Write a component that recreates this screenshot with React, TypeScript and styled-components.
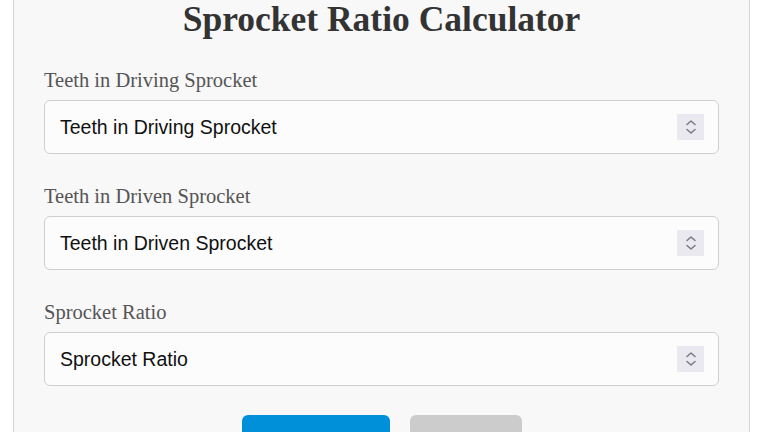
import React, { useState } from "react";
import styled, { createGlobalStyle } from "styled-components";

const GlobalStyle = createGlobalStyle`
  html, body {
    margin: 0;
    padding: 0;
    background: #ffffff;
  }
  body {
    font-family: "Liberation Serif", "Times New Roman", serif;
    overflow: hidden;
  }
`;

const Page = styled.div`
  padding: 0 18px 0 13px;
`;

const Card = styled.div`
  margin-top: -20px;
  background: #f8f8f8;
  border: 1px solid #d6d6d6;
  border-radius: 6px;
  padding: 20px 30px 30px;
`;

const Title = styled.h1`
  margin: 0 0 33px;
  font-family: "Liberation Serif", "Times New Roman", serif;
  font-size: 35.5px;
  line-height: 36px;
  font-weight: bold;
  color: #333333;
  text-align: center;
`;

const Group = styled.div<{ $last?: boolean }>`
  display: flex;
  flex-direction: column;
  gap: 10px;
  margin-bottom: ${(p) => (p.$last ? 29 : 32)}px;
`;

const Label = styled.label`
  font-size: 20.5px;
  line-height: 20px;
  color: #555555;
`;

const Field = styled.div`
  position: relative;
`;

const Input = styled.input`
  box-sizing: border-box;
  width: 100%;
  height: 54px;
  padding: 0 50px 0 15px;
  border: 1px solid #cfcfcf;
  border-radius: 6px;
  background: #fcfcfc;
  font-family: "Liberation Sans", Arial, sans-serif;
  font-size: 19.5px;
  color: #111111;
  outline: none;

  &::placeholder {
    color: #111111;
    opacity: 1;
  }
`;

const Spinner = styled.span`
  position: absolute;
  right: 15px;
  top: 50%;
  transform: translateY(-50%);
  width: 27px;
  height: 26px;
  background: #e9e9ef;
  display: flex;
  align-items: center;
  justify-content: center;
`;

const Actions = styled.div`
  display: flex;
  justify-content: center;
  gap: 20px;
`;

const Button = styled.button<{ $variant: "primary" | "secondary"; $width: number }>`
  width: ${(p) => p.$width}px;
  padding: 26px 0;
  border: none;
  border-radius: 6px;
  font-family: "Liberation Sans", Arial, sans-serif;
  font-size: 18px;
  color: #ffffff;
  cursor: pointer;
  background: ${(p) => (p.$variant === "primary" ? "#0090d9" : "#cccccc")};
`;

const SpinIcon = () => (
  <svg width="14" height="18" viewBox="0 0 14 18" fill="none" stroke="#7b7b85" strokeWidth="1.6" strokeLinecap="round" strokeLinejoin="round">
    <path d="M3 6.5 L7 3 L11 6.5" />
    <path d="M3 11.5 L7 15 L11 11.5" />
  </svg>
);

const fields = [
  { id: "driving", label: "Teeth in Driving Sprocket" },
  { id: "driven", label: "Teeth in Driven Sprocket" },
  { id: "ratio", label: "Sprocket Ratio" },
];

export default function App() {
  const [values, setValues] = useState<Record<string, string>>({});

  const clear = () => setValues({});
  const calculate = () => {
    const a = parseFloat(values.driving);
    const b = parseFloat(values.driven);
    if (!isNaN(a) && !isNaN(b) && a !== 0) {
      setValues({ ...values, ratio: (b / a).toFixed(2) });
    }
  };

  return (
    <>
      <GlobalStyle />
      <Page>
        <Card>
          <Title>Sprocket Ratio Calculator</Title>
          {fields.map((f, i) => (
            <Group key={f.id} $last={i === fields.length - 1}>
              <Label htmlFor={f.id}>{f.label}</Label>
              <Field>
                <Input
                  id={f.id}
                  type="text"
                  inputMode="numeric"
                  placeholder={f.label}
                  value={values[f.id] || ""}
                  onChange={(e) => setValues({ ...values, [f.id]: e.target.value })}
                />
                <Spinner>
                  <SpinIcon />
                </Spinner>
              </Field>
            </Group>
          ))}
          <Actions>
            <Button $variant="primary" $width={148} onClick={calculate}>Calculate</Button>
            <Button $variant="secondary" $width={112} onClick={clear}>Clear</Button>
          </Actions>
        </Card>
      </Page>
    </>
  );
}
